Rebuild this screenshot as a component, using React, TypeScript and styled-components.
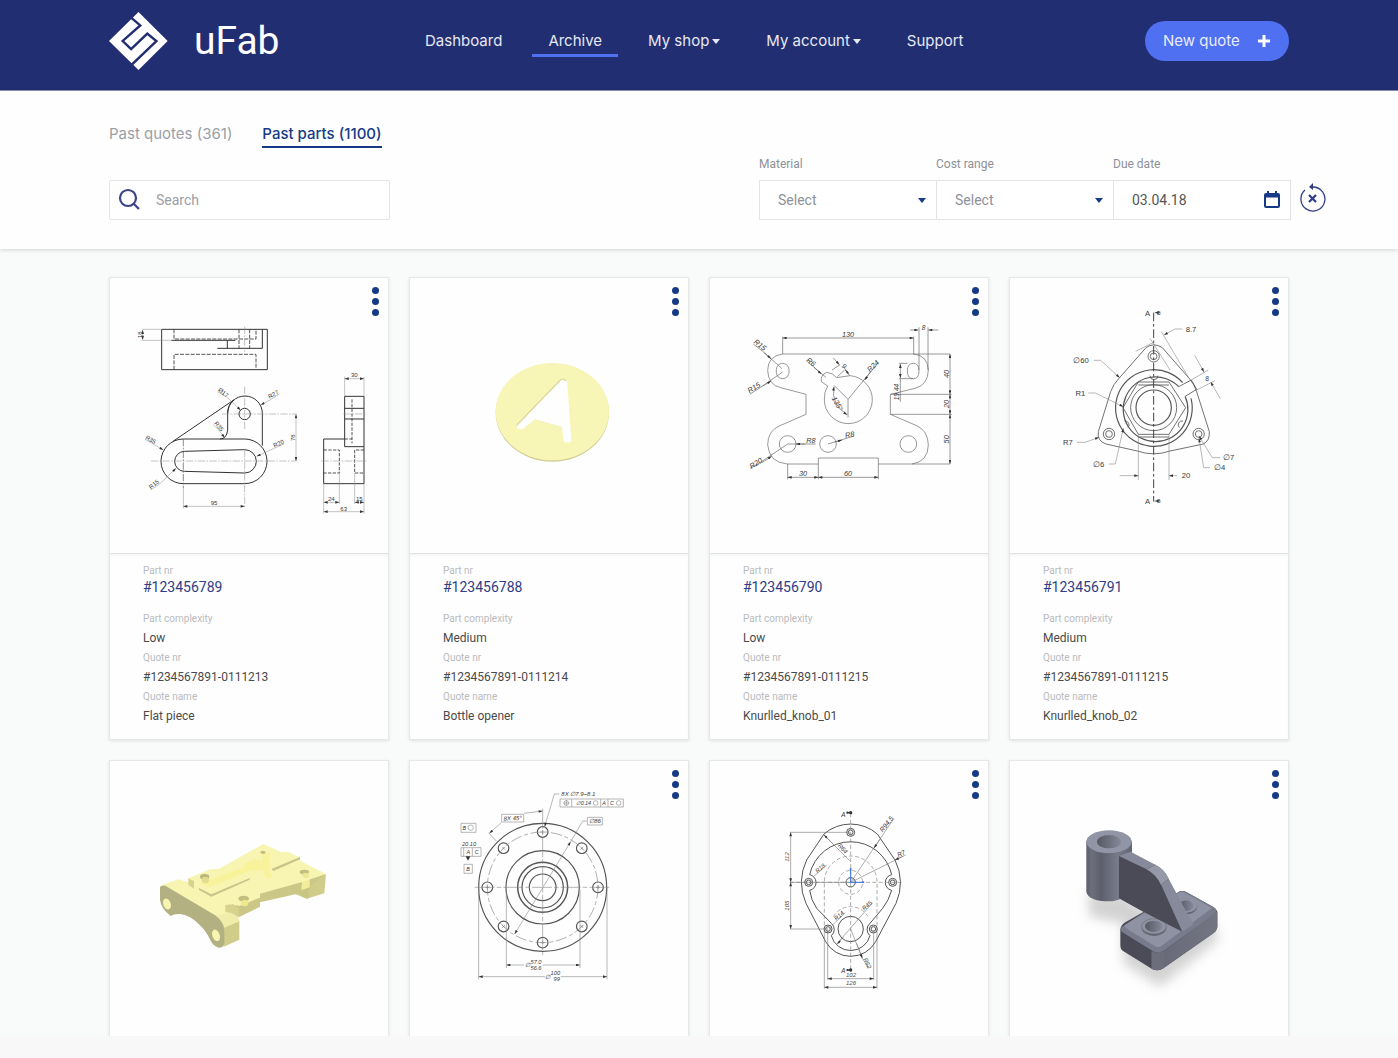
import React from "react";
import styled, { createGlobalStyle } from "styled-components";

const ui = `Inter, "Liberation Sans", sans-serif`;
const body = `Roboto, "Liberation Sans", sans-serif`;
const navy = "#222e72";
const blue = "#163a86";
const accent = "#4f70f0";

const GlobalStyle = createGlobalStyle`
  *, *::before, *::after { box-sizing: border-box; }
  body { margin: 0; background: #f8f8f8; font-family: ${body}; color: #4a4a4a; }
  button, input, select { font: inherit; color: inherit; }
`;

const Shell = styled.div`
  height: calc(100vh - 22px);
  overflow: hidden;
  background: #f9fbfb;
  box-shadow: 0 4px 16px rgba(0, 0, 0, 0.07);
`;

const Container = styled.div`
  width: calc(100% - 48px);
  max-width: 1180px;
  margin: 0 auto;
`;

const Header = styled.header`
  background: ${navy};
  border-bottom: 1px solid #8a91b8;
`;

const HeaderInner = styled(Container)`
  display: flex;
  align-items: center;
  height: 90px;
  padding-bottom: 8px;
`;

const Brand = styled.a`
  display: flex;
  flex: none;
  align-items: center;
  gap: 26px;
  width: 172px;
  color: #fff;
  font: 400 39px/48px ${body};
  text-decoration: none;
`;

const Nav = styled.nav`
  display: flex;
  gap: 14px;
  margin-left: 128px;
`;

const NavLink = styled.a<{ $active?: boolean }>`
  display: flex;
  align-items: center;
  gap: 3px;
  padding: 6px 16px 3px;
  border-bottom: 3px solid ${(p) => (p.$active ? accent : "transparent")};
  color: #e6e8f2;
  font: 400 15px/20px ${ui};
  text-decoration: none;
  white-space: nowrap;
`;

const NewQuote = styled.button`
  display: flex;
  align-items: center;
  justify-content: space-between;
  width: 144px;
  height: 40px;
  margin-left: auto;
  padding: 0 18px;
  border: 0;
  border-radius: 20px;
  background: ${accent};
  color: #e9edff;
  font: 400 15px/20px ${ui};
`;

const Toolbar = styled.section`
  position: relative;
  padding: 33px 0 29px;
  background: #fefefe;
  box-shadow: 0 1px 4px rgba(0, 0, 0, 0.16);
`;

const Tabs = styled.div`
  display: flex;
  gap: 30px;
  margin-bottom: 8px;
`;

const Tab = styled.a<{ $active?: boolean }>`
  padding-bottom: 2px;
  border-bottom: 2px solid ${(p) => (p.$active ? blue : "transparent")};
  color: ${(p) => (p.$active ? blue : "#9b9ea6")};
  font: ${(p) => (p.$active ? 500 : 400)} 15px/20px ${ui};
  text-decoration: none;
`;

const Controls = styled.div`
  display: flex;
  align-items: flex-end;
  justify-content: space-between;
  gap: 24px;
  margin-right: -38px;
`;

const SearchBox = styled.label`
  display: flex;
  align-items: center;
  gap: 14px;
  width: 281px;
  height: 40px;
  padding: 0 8px;
  border: 1px solid #e4e5e7;
  border-radius: 2px;
  background: #fff;
`;

const SearchInput = styled.input`
  flex: 1;
  min-width: 0;
  padding: 0;
  border: 0;
  outline: 0;
  background: none;
  font-size: 14px;
  &::placeholder { color: #9b9ea6; opacity: 1; }
`;

const Filters = styled.div`
  display: flex;
  align-items: flex-end;
`;

const Field = styled.div`
  width: 178px;
  & + & { margin-left: -1px; }
`;

const FieldLabel = styled.label`
  display: block;
  margin-bottom: 8px;
  color: #8d9199;
  font-size: 12px;
  line-height: 16px;
`;

const FieldBox = styled.div`
  position: relative;
  display: flex;
  align-items: center;
  height: 40px;
  border: 1px solid #e1e3e5;
  background: #fff;
`;

const Select = styled.select`
  width: 100%;
  height: 100%;
  padding: 0 32px 0 18px;
  border: 0;
  outline: 0;
  appearance: none;
  background: none;
  color: #8d9199;
  font-size: 14px;
`;

const CaretSlot = styled.span`
  position: absolute;
  right: 10px;
  display: flex;
  color: ${blue};
  pointer-events: none;
`;

const DateInput = styled.input`
  flex: 1;
  min-width: 0;
  padding: 0 0 0 18px;
  border: 0;
  outline: 0;
  background: none;
  color: #555;
  font-size: 14px;
`;

const IconButton = styled.button`
  display: flex;
  padding: 0;
  border: 0;
  background: none;
  color: ${blue};
`;

const CalendarButton = styled(IconButton)`
  margin-right: 9px;
`;

const ResetButton = styled(IconButton)`
  margin: 0 0 7px 8px;
`;

const Grid = styled(Container)`
  display: grid;
  grid-template-columns: repeat(4, minmax(0, 1fr));
  gap: 20px;
  padding-top: 28px;
`;

const CardBox = styled.article`
  position: relative;
  border: 1px solid #e6e8e8;
  background: #fefefe;
  box-shadow: 0 1px 3px rgba(0, 0, 0, 0.1);
`;

const Art = styled.svg`
  display: block;
  width: 100%;
  height: auto;
  font-family: "Liberation Sans", sans-serif;
`;

const Menu = styled.button`
  position: absolute;
  top: 5px;
  right: 5px;
  display: flex;
  flex-direction: column;
  gap: 4px;
  padding: 4px;
  border: 0;
  background: none;
`;

const Dot = styled.span`
  width: 7px;
  height: 7px;
  border-radius: 50%;
  background: ${blue};
`;

const Info = styled.dl`
  margin: 0;
  padding: 10px 33px 14px;
  border-top: 1px solid #e0e2e2;
  box-shadow: inset 0 2px 2px rgba(0, 0, 0, 0.03);
`;

const Term = styled.dt`
  margin-bottom: 3px;
  color: #b9bbbd;
  font-size: 10px;
  line-height: 14px;
`;

const PartTerm = styled(Term)`
  margin-bottom: 0;
`;

const Value = styled.dd`
  margin: 0 0 4px;
  color: #4a4a4a;
  font-size: 12px;
  line-height: 18px;
  &:last-child { margin-bottom: 0; }
`;

const PartNumber = styled(Value)`
  margin-bottom: 15px;
`;

const PartLink = styled.a`
  color: #2f3c86;
  font-size: 14px;
  text-decoration: none;
`;

const Caret = () => (
  <svg width="8" height="5" viewBox="0 0 8 5" fill="currentColor" aria-hidden="true">
    <path d="M0 0h8L4 5z" />
  </svg>
);

const Logo = () => (
  <svg width="59" height="58" viewBox="53 40 168 172" preserveAspectRatio="none" aria-hidden="true">
    <path d="M137 40 220 126 137 212 53 126z" fill="#fff" />
    <path d="M116 57 142 80 92 126 116 150 162 104 188 126 118 196" fill="none" stroke={navy} strokeWidth="7" />
  </svg>
);

type TProps = { x: number; y: number; s?: number; r?: number; c?: string; children: React.ReactNode };
const T = ({ x, y, s = 18, r = 0, c = "#383838", children }: TProps) => (
  <text x={x} y={y} fontSize={s} fill={c} stroke="none" textAnchor="middle" dominantBaseline="central" transform={`rotate(${r} ${x} ${y})`}>
    {children}
  </text>
);

const Arrow = ({ id }: { id: string }) => (
  <marker id={id} viewBox="0 0 12 8" refX="12" refY="4" markerWidth="14" markerHeight="8" markerUnits="userSpaceOnUse" orient="auto-start-reverse">
    <path d="M0 0 12 4 0 8z" fill="#333" />
  </marker>
);

/* Draws every subpath of d on its own, so that each one gets its arrowheads. */
const Dims = ({ d, head, both }: { d: string; head: string; both?: boolean }) => (
  <>
    {d.split("M").filter(Boolean).map((part) => (
      <path key={part} d={`M${part}`} markerEnd={`url(#${head})`} markerStart={both ? `url(#${head})` : undefined} />
    ))}
  </>
);

const FlatPiece = () => (
  <Art viewBox="30 24 834 825" role="img" aria-label="Flat piece drawing">
    <defs><Arrow id="a1" /></defs>
    <g fill="none" stroke="#333" strokeWidth="3">
      <path d="M185 178H502V299H185z" />
      <path d="M214 211H406M382 211V235M352 235H487V178" />
      <path d="M222 178V207H468V178M417 178V235M449 178V235M222 299V253H468V299" strokeDasharray="12 4" strokeWidth="2.5" />
      <path d="M250 507H434A67 67 0 0 1 434 641H250A67 67 0 0 1 250 507z" />
      <path d="M254 544 434 539A35 35 0 0 1 434 609L254 604A30 30 0 0 1 254 544z" />
      <path d="M219 514 401 390M383 430A52 52 0 0 1 487 430V527M401 390Q384 402 383 430V480Q380 507 360 507" />
      <circle cx="434" cy="432" r="17" />
      <path d="M734 379H792V530H734zM734 507H671V641H792V530M734 415H792M734 447H792" />
      <path d="M671 540H718V609H671M792 540H764V609H792M756 388V520M734 507H756" strokeDasharray="10 4" strokeWidth="2.5" />
    </g>
    <g fill="none" stroke="#888" strokeWidth="1.5">
      <path d="M434 170V245M434 350V480M366 432H590M153 573H590M434 540V715M730 432H798M664 573H798" strokeDasharray="22 4 5 4" />
      <path d="M250 507V655" strokeDasharray="22 4 5 4" stroke="#555" strokeWidth="2" />
      <path d="M250 655V715M125 178H185M125 211H214M671 641V730M792 641V730M718 609V702M764 609V702M734 379V320M792 379V320" />
      <Dims both head="a1" d="M128 180V209M250 709H434M588 433V573M671 725H792M671 697H718M764 697H792M734 326H792" />
      <Dims head="a1" d="M352 365 382 382 422 421M538 372 510 390 482 405M340 465 352 475 374 503M135 508 160 522 190 540M552 522 520 536 470 559M152 660 180 641 228 595" />
    </g>
    <T x={119} y={194} r={-90}>18</T>
    <T x={370} y={368} r={40}>Ø17</T>
    <T x={520} y={373} r={-28}>R27</T>
    <T x={357} y={469} r={50}>R35</T>
    <T x={152} y={509} r={30}>R35</T>
    <T x={536} y={521} r={-26}>R20</T>
    <T x={162} y={643} r={-40}>R15</T>
    <T x={342} y={699}>95</T>
    <T x={578} y={503} r={-90}>78</T>
    <T x={763} y={316}>30</T>
    <T x={694} y={687}>24</T>
    <T x={778} y={687}>15</T>
    <T x={731} y={716}>63</T>
  </Art>
);

const BottleOpener = () => (
  <Art viewBox="30 24 834 825" role="img" aria-label="Bottle opener model">
    <ellipse cx="457" cy="428" rx="170" ry="147" fill="#cfce95" />
    <ellipse cx="457" cy="425" rx="170" ry="146" fill="#f8f6b6" />
    <path d="M352 462 478 334Q487 325 496 331Q502 335 502 342L514 510Q514 518 502 518Q492 518 490 510L486 472 405 449 374 474Q364 481 353 476Q348 470 352 462z" fill="#fefefe" />
    <path d="M350 466 478 333Q487 324 498 332" fill="none" stroke="#dcd99c" strokeWidth="4" />
    <path d="M374 474 405 449 486 472" fill="none" stroke="#efecaa" strokeWidth="2" />
  </Art>
);

const KnobOne = () => (
  <Art viewBox="30 24 834 825" role="img" aria-label="Knurled knob 01 drawing">
    <defs><Arrow id="a3" /></defs>
    <g fill="none" stroke="#666" strokeWidth="2">
      <path d="M248 252H750M248 252Q203 258 203 302Q205 345 242 353L318 373V433L240 467Q203 482 203 525Q208 578 262 582H355V564H535V582H750M636 582Q684 575 685 525Q684 482 650 467L571 433V373L645 355Q684 345 685 300Q683 256 640 252" />
      <rect x="229" y="280" width="38" height="46" rx="19" />
      <path d="M657 303Q657 280 640 280Q622 280 622 303Q622 326 640 326Q657 326 657 303z" />
      <path d="M383 348Q372 365 373 390A72 72 0 1 0 450 317L410 323Q398 308 380 307Q361 315 364 335L383 348" />
      <path d="M396 300 420 284M432 292 448 316M412 320 434 300M444 388 402 346M444 388V442" />
      <circle cx="263" cy="522" r="25" /><circle cx="384" cy="522" r="25" /><circle cx="625" cy="522" r="25" />
      <path d="M571 373H755M571 433H755M248 252V200M641 252V200M657 300V172M684 300V172M263 582V628M355 582V628M535 582V628M622 280H597M640 326H597M601 395V326" />
      <Dims both head="a3" d="M355 622 263 622M355 622H535M248 204H641M750 252V373M750 373V433M750 433V582M601 282V324M402 350Q392 405 442 434" />
      <path d="M160 222 188 244 246 296M150 372 182 352 248 306M322 275 378 322M444 388 533 280M150 595 180 578 263 522M263 522H347M384 522 462 498" />
      <Dims head="a3" d="M192 248 213 266M188 348 213 333M342 292 364 312M514 303 494 330M186 578 215 559M316 522H288M404 516 426 510M400 264 418 284M448 314 436 300M630 180H655M715 180H685" />
    </g>
    <g fontStyle="italic">
      <T x={444} y={194} s={22}>130</T>
      <T x={671} y={171} s={20}>8</T>
      <T x={180} y={225} s={22} r={38}>R15</T>
      <T x={162} y={353} s={22} r={-32}>R15</T>
      <T x={333} y={276} s={22} r={38}>R6</T>
      <T x={433} y={288} s={20} r={45}>9</T>
      <T x={519} y={288} s={22} r={-45}>R24</T>
      <T x={412} y={401} s={22} r={60}>135°</T>
      <T x={589} y={366} s={20} r={-90}>19.44</T>
      <T x={739} y={312} s={22} r={-90}>40</T>
      <T x={739} y={402} s={22} r={-90}>20</T>
      <T x={739} y={508} s={22} r={-90}>50</T>
      <T x={333} y={512} s={22}>R8</T>
      <T x={449} y={494} s={22} r={-10}>R8</T>
      <T x={168} y={580} s={22} r={-32}>R20</T>
      <T x={309} y={611} s={22}>30</T>
      <T x={444} y={611} s={22}>60</T>
    </g>
  </Art>
);

const KnobTwo = () => (
  <Art viewBox="30 24 834 825" role="img" aria-label="Knurled knob 02 drawing">
    <defs><Arrow id="a4" /></defs>
    <g fill="none" stroke="#555" strokeWidth="2.5">
      <path d="M438 233Q461 216 487 233L570 328Q584 345 590 365L628 485Q630 512 610 522L510 543Q461 560 412 543L318 522Q290 512 295 485L332 365Q340 342 357 325z" />
      <path d="M548 338A115 115 0 1 0 573 385M536 350A97 97 0 1 0 556 380" strokeWidth="3.5" />
      <path d="M415 336H507L557 413 507 493H415L369 413z" />
      <path d="M415 345H507M415 501H507" />
      <circle cx="461" cy="413" r="69" /><circle cx="461" cy="413" r="53" strokeWidth="3.5" />
      <path d="M536 350 574 330 590 358 554 380M450 317A12 12 0 0 0 474 317M374 453A12 12 0 0 1 384 473M549 453A12 12 0 0 0 538 473" />
      {[[461, 259], [327, 492], [596, 492]].map(([x, y]) => (
        <g key={x}><circle cx={x} cy={y} r="17" /><circle cx={x} cy={y} r="10" /></g>
      ))}
    </g>
    <path d="M461 128V695" stroke="#444" strokeWidth="3" strokeDasharray="26 8 8 8" />
    <g fill="none" stroke="#888" strokeWidth="1.8">
      <path d="M407 244 461 217M450 205 510 300M484 185 567 325M574 330 625 300M590 360 645 332M415 493V630M507 493V630" />
      <Dims head="a4" d="M547 177H525L492 195M281 271H302L359 323M265 369H286L370 410M230 517H255L297 502M327 582H346L370 475M660 563H637L597 498M630 593H611L597 505M359 617H415M532 617H507M584 256 612 306M661 386 632 336M482 128H464M482 693H464" />
    </g>
    <T x={443} y={129} s={23}>A</T><T x={476} y={128} s={16}>B</T>
    <T x={443} y={695} s={23}>A</T><T x={476} y={694} s={16}>B</T>
    <T x={573} y={177} s={23}>8.7</T>
    <T x={243} y={272} s={23}>∅60</T>
    <T x={241} y={369} s={23}>R1</T>
    <T x={204} y={516} s={23}>R7</T>
    <T x={296} y={582} s={23}>∅6</T>
    <T x={558} y={617} s={23}>20</T>
    <T x={686} y={563} s={23}>∅7</T>
    <T x={659} y={593} s={23}>∅4</T>
    <T x={621} y={324} s={20}>8</T>
  </Art>
);

const Bracket = () => (
  <Art viewBox="30 33 834 825" role="img" aria-label="Yellow bracket model">
    <path d="M371 590 418 569V512L385 490 360 520z" fill="#d0cd8a" />
    <path d="M585 432 620 446 673 430 678 372 560 395z" fill="#d0cd8b" />
    <path d="M418 501 480 470V457L606 428 678 372 480 420 400 470z" fill="#cbc887" />
    <path d="M606 393H628V443L620 446 600 436z" fill="#c9c683" />
    <path d="M606 393 629 386V412L604 421z" fill="#f2ed9a" />
    <path d="M185 405 236 388 265 397V385L330 358 356 357 490 282 545 307 565 305 600 323 602 333 678 372 604 397 480 431V443L418 468 392 461 375 474 418 508 375 530 350 500z" fill="#f8f5b3" />
    <path d="M265 385V405L282 416V393zM376 465V485L416 503V476L400 462z" fill="#d7d38d" />
    <path d="M180 412Q182 404 196 407L348 497Q372 515 373 545V580Q371 594 357 593Q340 590 331 570Q317 540 296 522Q270 495 240 492Q222 491 212 498Q183 476 180 450z" fill="#b3b082" />
    <path d="M348 497 385 487Q416 495 418 514L373 533Q368 510 348 497z" fill="#f0edab" />
    <ellipse cx="201" cy="462" rx="11" ry="17" fill="#f8f5b3" transform="rotate(-20 201 462)" />
    <ellipse cx="348" cy="556" rx="11" ry="18" fill="#f8f5b3" transform="rotate(-20 348 556)" />
    <path d="M297 414 334 433 449 384V389L334 440 297 420zM514 357 600 321V328L520 363z" fill="#c8c58a" />
    <path d="M302 400 430 352 432 342Q470 320 488 335V309H509V365L516 381 502 388 487 360 450 362 330 412z" fill="#f8f29a" />
    <ellipse cx="314" cy="380" rx="14" ry="8" fill="#b8b57c" /><ellipse cx="431" cy="446" rx="16" ry="9" fill="#c2be81" />
    <ellipse cx="489" cy="307" rx="8" ry="5" fill="#c2be81" /><ellipse cx="613" cy="366" rx="14" ry="7" fill="#c2be81" />
    <ellipse cx="316" cy="390" rx="11" ry="10" fill="#e2dd8d" /><ellipse cx="434" cy="459" rx="11" ry="10" fill="#efe98e" />
    <ellipse cx="617" cy="376" rx="10" ry="8" fill="#ece792" />
  </Art>
);

const Flange = () => (
  <Art viewBox="30 33 834 825" role="img" aria-label="Flange drawing">
    <defs><Arrow id="a6" /></defs>
    <g fill="none" stroke="#555" strokeWidth="3.5">
      <circle cx="428" cy="412" r="192" /><circle cx="428" cy="412" r="110" /><circle cx="428" cy="412" r="75" strokeWidth="4.5" />
      <circle cx="428" cy="412" r="62" /><circle cx="428" cy="412" r="40" />
      {[0, 45, 90, 135, 180, 225, 270, 315].map((a) => (
        <g key={a} transform={`rotate(${a} 428 412)`}>
          <circle cx="428" cy="246" r="16" />
          <path d="M422 246H434M428 240V252" strokeWidth="1.5" />
        </g>
      ))}
    </g>
    <circle cx="428" cy="412" r="166" fill="none" stroke="#888" strokeWidth="2" strokeDasharray="34 8 12 8" />
    <g fill="none" stroke="#888" strokeWidth="1.8">
      <path d="M428 176V615M224 412H634" strokeDasharray="60 6 14 6" />
      <path d="M236 412V688M621 412V688M319 420V654M540 420V654M265 248 290 274M560 213H548L512 275" />
      <Dims both head="a6" d="M512 275 344 552" />
      <Dims head="a6" d="M478 132H463L434 230M372 645H319M428 645H540M435 680H236M482 680H621M304 218 268 250M372 190 428 183" />
      <path d="M305 193H371V216H305zM480 147H670V171H480zM515 147V171M602 147V171M624 147V171M562 202H607V225H562zM183 220H228V247H183zM183 293H243V319H183zM191 293V319M217 293V319M192 343H217V370H192z" />
      <circle cx="212" cy="233" r="8" /><circle cx="587" cy="159" r="7" /><circle cx="656" cy="159" r="7" /><circle cx="499" cy="159" r="7" /><path d="M490 159H508M499 150V168" />
    </g>
    <path d="M197 319H211L204 332z" fill="#333" />
    <g fontStyle="italic">
      <T x={535} y={132}>8X ∅7.9–8.1</T>
      <T x={550} y={159} s={16}>∅0.14</T><T x={612} y={159} s={16}>A</T><T x={636} y={159} s={16}>C</T>
      <T x={338} y={205} r={-3}>8X 45°</T>
      <T x={585} y={214}>∅86</T>
      <T x={193} y={234} s={16}>B</T>
      <T x={207} y={281} s={17}>20.10</T>
      <T x={205} y={307} s={16}>A</T><T x={230} y={307} s={16}>C</T><T x={204} y={357} s={16}>B</T>
      <T x={382} y={645}>∅</T><T x={408} y={636} s={17}>57.0</T><T x={408} y={655} s={17}>56.6</T>
      <T x={443} y={680}>∅</T><T x={466} y={670} s={17}>100</T><T x={470} y={688} s={17}>99</T>
    </g>
  </Art>
);

const Cover = () => (
  <Art viewBox="30 33 834 825" role="img" aria-label="Cover plate drawing">
    <defs><Arrow id="a7" /></defs>
    <g fill="none" stroke="#555" strokeWidth="3">
      <path d="M372 252A122 122 0 0 1 532 252L585 330A150 150 0 0 1 588 460L527 575A86 86 0 0 1 377 575L318 460A150 150 0 0 1 320 330z" />
      <path d="M329 374A126 126 0 0 1 575 374A24 24 0 0 0 575 421Q567 450 548 475L510 520A24 24 0 0 0 510 557A60 60 0 0 1 394 557A24 24 0 0 0 394 520L350 475Q333 450 329 421A24 24 0 0 0 329 374" />
      <circle cx="452" cy="537" r="38" /><circle cx="452" cy="397" r="14" />
      {[[452, 247], [326, 397], [578, 397], [384, 537], [520, 537]].map(([x, y]) => (
        <g key={`${x}-${y}`}><circle cx={x} cy={y} r="12" /><circle cx={x} cy={y} r="7" /></g>
      ))}
    </g>
    <g fill="none" stroke="#777" strokeWidth="1.8">
      <path d="M373 545V397A79 79 0 0 1 531 397V545M400 500A60 60 0 0 1 504 500M416 397A36 36 0 1 0 488 397A36 36 0 1 0 416 397M452 190V660M270 397H610" strokeDasharray="12 7" />
      <path d="M270 247H452M270 397H452M270 537H384M373 545V716M531 545V716M383 540V690M521 540V690" />
      <path d="M372 255 452 335M452 397 582 205M452 397 617 315M340 380 380 345M398 525 436 488M412 580 518 458M452 537 487 625 507 655" />
      <Dims both head="a7" d="M272 247V397M272 397V537M373 712H531M383 686H521" />
      <Dims head="a7" d="M438 188H452M438 660H452M400 282 372 255M540 268 522 294M610 318 585 330M470 580 487 625M430 562 412 582" />
    </g>
    <path d="M452 357V397H490" fill="none" stroke="#3772e8" strokeWidth="3" />
    <circle cx="452" cy="357" r="3" fill="#3772e8" /><circle cx="490" cy="397" r="3" fill="#3772e8" />
    <circle cx="452" cy="188" r="5" fill="#333" /><circle cx="452" cy="660" r="5" fill="#333" />
    <g fontStyle="italic">
      <T x={430} y={193} s={19}>A</T><T x={430} y={661} s={19}>A</T>
      <T x={559} y={222} r={-52} s={20}>R94.5</T>
      <T x={603} y={310} r={-25} s={19}>R7</T>
      <T x={428} y={296} r={48}>R64</T>
      <T x={262} y={321} r={-90} c="#64492f">112</T>
      <T x={262} y={467} r={-90}>105</T>
      <T x={361} y={355} r={-42} c="#64492f">R18</T>
      <T x={417} y={497} r={-42}>R14</T>
      <T x={501} y={467} r={-42}>R45</T>
      <T x={502} y={640} r={66}>R62</T>
      <T x={453} y={675} c="#64492f">102</T>
      <T x={453} y={700} c="#64492f">126</T>
    </g>
  </Art>
);

const Support = () => (
  <Art viewBox="30 33 834 825" role="img" aria-label="Grey support model">
    <defs>
      <linearGradient id="cyl" x1="0" x2="1"><stop offset="0" stopColor="#5c5e6b" /><stop offset=".12" stopColor="#6d6f7d" /><stop offset=".32" stopColor="#5d5f6c" /><stop offset=".68" stopColor="#777a89" /><stop offset="1" stopColor="#636573" /></linearGradient>
      <linearGradient id="hole" x1="0" x2="1"><stop offset="0" stopColor="#555763" /><stop offset="1" stopColor="#858898" /></linearGradient>
      <linearGradient id="side" x1="0" x2="1"><stop offset="0" stopColor="#666877" /><stop offset="1" stopColor="#737583" /></linearGradient>
      <filter id="soft" x="-30%" y="-30%" width="160%" height="160%"><feGaussianBlur stdDeviation="17" /></filter>
    </defs>
    <path d="M262 430H370L440 480 640 520 655 570 480 710 370 640V520L270 500z" fill="#bbb" opacity=".65" filter="url(#soft)" />
    <path d="M361 540Q362 525 376 517L430 486 540 424Q550 421 560 427L640 471Q652 479 652 490V532Q650 543 641 549L490 655Q473 666 455 656L368 602Q361 597 361 588z" fill="#4b4b57" />
    <path d="M455 604 470 608 492 604 652 484V532Q650 543 641 549L490 655Q473 666 455 656z" fill="url(#side)" />
    <path d="M455 604Q470 612 492 604V652Q473 666 455 656z" fill="#6c6e7c" />
    <path d="M364 532 432 487 540 424Q550 421 560 427L645 474Q653 481 646 490L492 602Q472 612 458 603L366 546Q360 540 364 532z" fill="#787b8b" />
    <path d="M378 523 434 488 540 426Q548 424 555 428L636 474 484 588Q474 594 464 588L376 533Q371 528 378 523z" fill="#8f92a2" />
    <ellipse cx="560" cy="469" rx="32" ry="24" fill="#62646f" /><ellipse cx="560" cy="466" rx="32" ry="22" fill="#8f92a2" /><ellipse cx="558" cy="467" rx="22" ry="16" fill="url(#hole)" />
    <ellipse cx="462" cy="533" rx="37" ry="25" fill="#62646f" /><ellipse cx="462" cy="529" rx="37" ry="23" fill="#8f92a2" stroke="#6d6f7c" strokeWidth="2" /><ellipse cx="461" cy="529" rx="26" ry="17" fill="url(#hole)" />
    <path d="M259 275V425Q264 453 327 454Q350 453 362 446L396 420V275z" fill="url(#cyl)" />
    <path d="M392 305 466 344Q494 357 506 386L580 524 547 545 430 485 357 445V318z" fill="#878a9a" />
    <path d="M357 318 440 358Q470 374 484 406L547 545 430 485 357 445z" fill="#4b4b57" />
    <path d="M440 358 466 344Q494 357 506 386L484 406Q470 374 440 358z" fill="#9699a8" />
    <path d="M440 358 466 344M483 404 506 387" stroke="#77766f" strokeWidth="2" />
    <ellipse cx="327" cy="277" rx="68" ry="34" fill="#6c6e7c" /><ellipse cx="327" cy="275" rx="68" ry="34" fill="#9295a5" /><ellipse cx="327" cy="275" rx="36" ry="20" fill="url(#hole)" />
  </Art>
);

type Part = { art: React.ComponentType; nr: string; level: string; quote: string; name: string };

const parts: Part[] = [
  { art: FlatPiece, nr: "#123456789", level: "Low", quote: "#1234567891-0111213", name: "Flat piece" },
  { art: BottleOpener, nr: "#123456788", level: "Medium", quote: "#1234567891-0111214", name: "Bottle opener" },
  { art: KnobOne, nr: "#123456790", level: "Low", quote: "#1234567891-0111215", name: "Knurlled_knob_01" },
  { art: KnobTwo, nr: "#123456791", level: "Medium", quote: "#1234567891-0111215", name: "Knurlled_knob_02" },
];

const previews: { art: React.ComponentType; menu: boolean }[] = [
  { art: Bracket, menu: false },
  { art: Flange, menu: true },
  { art: Cover, menu: true },
  { art: Support, menu: true },
];

const CardMenu = () => (
  <Menu type="button" aria-label="Part options"><Dot /><Dot /><Dot /></Menu>
);

export default function App() {
  return (
    <>
      <GlobalStyle />
      <Shell>
        <Header>
          <HeaderInner>
            <Brand href="#"><Logo />uFab</Brand>
            <Nav>
              <NavLink href="#dashboard">Dashboard</NavLink>
              <NavLink href="#archive" $active>Archive</NavLink>
              <NavLink href="#shop">My shop<Caret /></NavLink>
              <NavLink href="#account">My account<Caret /></NavLink>
              <NavLink href="#support">Support</NavLink>
            </Nav>
            <NewQuote type="button">
              New quote
              <svg width="14" height="14" viewBox="0 0 14 14" stroke="#fff" strokeWidth="3" aria-hidden="true"><path d="M7 1v12M1 7h12" /></svg>
            </NewQuote>
          </HeaderInner>
        </Header>
        <Toolbar>
          <Container>
            <Tabs>
              <Tab href="#quotes">Past quotes (361)</Tab>
              <Tab href="#parts" $active>Past parts (1100)</Tab>
            </Tabs>
            <Controls>
              <SearchBox>
                <svg width="24" height="24" viewBox="0 0 24 24" fill="none" stroke="#3a4488" strokeWidth="2.2" aria-hidden="true">
                  <circle cx="10" cy="10" r="8" /><path d="m15 15 6 6" />
                </svg>
                <SearchInput type="text" placeholder="Search" aria-label="Search" />
              </SearchBox>
              <Filters>
                <Field>
                  <FieldLabel htmlFor="material">Material</FieldLabel>
                  <FieldBox>
                    <Select id="material"><option>Select</option></Select>
                    <CaretSlot><Caret /></CaretSlot>
                  </FieldBox>
                </Field>
                <Field>
                  <FieldLabel htmlFor="cost">Cost range</FieldLabel>
                  <FieldBox>
                    <Select id="cost"><option>Select</option></Select>
                    <CaretSlot><Caret /></CaretSlot>
                  </FieldBox>
                </Field>
                <Field>
                  <FieldLabel htmlFor="due">Due date</FieldLabel>
                  <FieldBox>
                    <DateInput id="due" type="text" defaultValue="03.04.18" />
                    <CalendarButton type="button" aria-label="Open calendar">
                      <svg width="18" height="18" viewBox="0 0 18 18" fill="none" stroke="currentColor" aria-hidden="true">
                        <rect x="2" y="3" width="14" height="13" rx="1" strokeWidth="2" /><path d="M2 5h14" strokeWidth="3" /><path d="M5 0v4M13 0v4" strokeWidth="2" />
                      </svg>
                    </CalendarButton>
                  </FieldBox>
                </Field>
                <ResetButton type="button" aria-label="Reset filters">
                  <svg width="28" height="30" viewBox="0 0 28 30" fill="none" stroke="#2f3c86" aria-hidden="true">
                    <path d="M6 7A12 12 0 1 0 14 4" strokeWidth="1.3" />
                    <path d="M14 0v7L10 4z" fill="#2f3c86" stroke="none" />
                    <path d="m10 12 7 7M17 12l-7 7" strokeWidth="2.2" />
                  </svg>
                </ResetButton>
              </Filters>
            </Controls>
          </Container>
        </Toolbar>
        <Grid as="main">
          {parts.map(({ art: Picture, ...p }) => (
            <CardBox key={p.nr}>
              <Picture />
              <CardMenu />
              <Info>
                <PartTerm>Part nr</PartTerm>
                <PartNumber><PartLink href="#part">{p.nr}</PartLink></PartNumber>
                <Term>Part complexity</Term>
                <Value>{p.level}</Value>
                <Term>Quote nr</Term>
                <Value>{p.quote}</Value>
                <Term>Quote name</Term>
                <Value>{p.name}</Value>
              </Info>
            </CardBox>
          ))}
          {previews.map(({ art: Picture, menu }, i) => (
            <CardBox key={i}>
              <Picture />
              {menu && <CardMenu />}
            </CardBox>
          ))}
        </Grid>
      </Shell>
    </>
  );
}
